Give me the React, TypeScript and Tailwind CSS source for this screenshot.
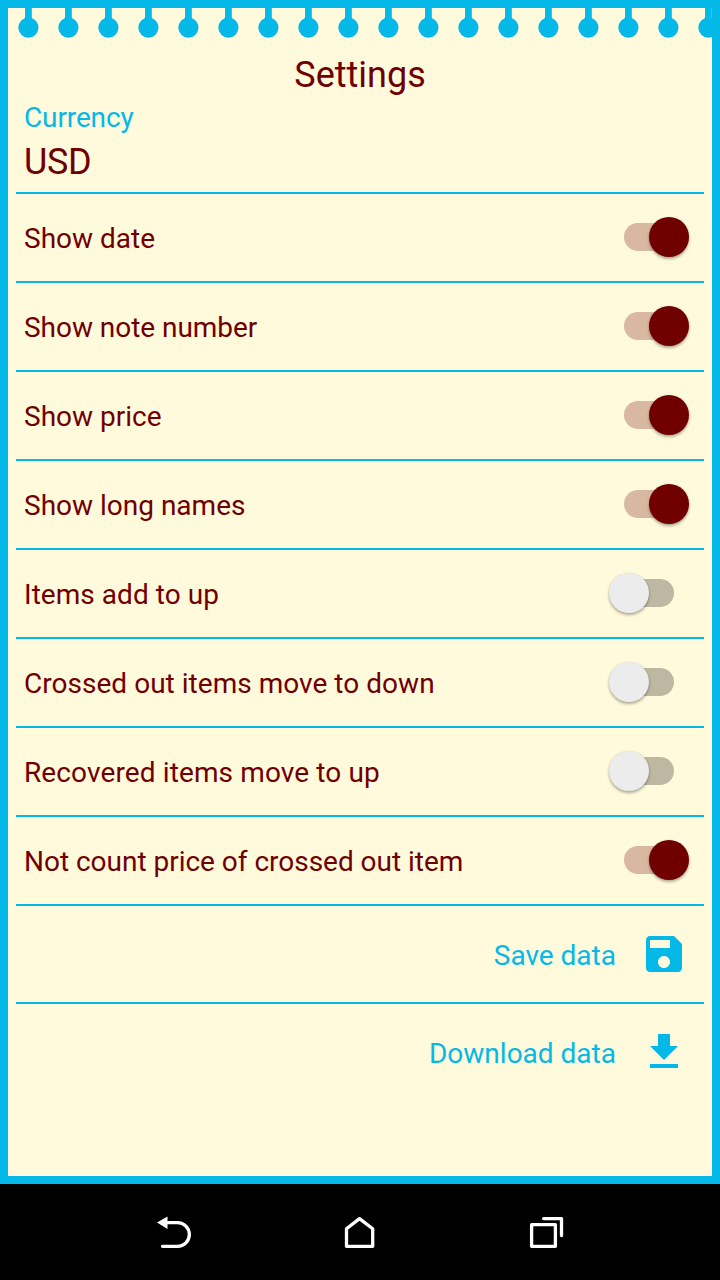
import { useState } from 'react';

const OPTIONS = [
  { label: 'Show date', on: true },
  { label: 'Show note number', on: true, tracking: 'tracking-[-0.04px]' },
  { label: 'Show price', on: true },
  { label: 'Show long names', on: true },
  { label: 'Items add to up', on: false, tracking: 'tracking-[0.04px]' },
  { label: 'Crossed out items move to down', on: false, tracking: 'tracking-[0.03px]' },
  { label: 'Recovered items move to up', on: false, tracking: 'tracking-[0.12px]' },
  { label: 'Not count price of crossed out item', on: true, tracking: 'tracking-[-0.02px]' },
];

function Binding() {
  return (
    <svg className="block w-full h-[30px] shrink-0" fill="#04b9e7">
      <defs>
        <pattern id="ring" width="40" height="30" patternUnits="userSpaceOnUse">
          <rect x="17" width="6.8" height="14" />
          <circle cx="20.4" cy="19.6" r="10.1" />
        </pattern>
      </defs>
      <rect width="100%" height="30" fill="url(#ring)" />
    </svg>
  );
}

function Toggle({ on, label, onChange }: { on: boolean; label: string; onChange: () => void }) {
  return (
    <button
      role="switch"
      aria-checked={on}
      aria-label={label}
      onClick={onChange}
      className={`relative w-[50px] h-7 mr-[30px] rounded-full ${on ? 'bg-[#d9b8a2]' : 'bg-[#beb8a2]'}`}
    >
      <span
        className={`absolute -top-1.5 size-10 rounded-full shadow-[0_2px_3px_rgba(0,0,0,0.3),0_0_2px_rgba(0,0,0,0.12)] ${
          on ? 'left-[25px] bg-[#700000]' : '-left-[15px] bg-[#ececec]'
        }`}
      />
    </button>
  );
}

function OptionRow({ label, on, tracking = '' }: { label: string; on: boolean; tracking?: string }) {
  const [checked, setChecked] = useState(on);

  return (
    <div className="flex items-center justify-between h-[89px] pl-2 pb-px border-b-2 border-[#04b9e7]">
      <span className={`relative top-px text-[28px] leading-[33px] ${tracking}`}>{label}</span>
      <Toggle on={checked} label={label} onChange={() => setChecked(!checked)} />
    </div>
  );
}

function ActionRow({ label, path }: { label: string; path: string }) {
  return (
    <button className="flex items-center justify-end gap-6 w-full h-24 pr-4 text-[28px] leading-[33px] text-[#04b9e7]">
      <span className="relative top-px">{label}</span>
      <svg className="size-12" viewBox="0 0 24 24" fill="currentColor">
        <path d={path} />
      </svg>
    </button>
  );
}

function NavBar() {
  return (
    <nav className="h-24 shrink-0 bg-black">
      <svg className="block" width="720" height="96" fill="none" stroke="#fff" strokeWidth="3.3" strokeLinecap="round" strokeLinejoin="round">
        <path d="M167 38.6H177.500a11.850 11.850 0 0 1 0 23.700H162.500" />
        <path d="M157 38.6L167.500 32.500V45Z" fill="#fff" stroke="none" />
        <path d="M346.500 44.700L359.500 34.600L372.700 44.700V62.300H346.500Z" />
        <path d="M531.600 40.600H555.400V62.300H531.600Z" />
        <path d="M543.600 34.600H561.500V51.500" />
      </svg>
    </nav>
  );
}

export default function App() {
  return (
    <div className="flex flex-col w-[720px] h-[1280px] font-[Roboto,sans-serif] text-[#700000]">
      <main className="flex flex-col flex-1 border-8 border-[#04b9e7] bg-[#fffadb]">
        <Binding />
        <div className="px-2 pt-4">
          <h1 className="text-center text-[36px] leading-[42px]">Settings</h1>
          <div className="h-[98px] pl-2 pt-[5px] border-b-2 border-[#04b9e7]">
            <p className="text-[28px] leading-[33px] tracking-[-0.12px] text-[#04b9e7]">Currency</p>
            <p className="pt-[7px] text-[36px] leading-[42px] tracking-[-0.3px]">USD</p>
          </div>
          {OPTIONS.map((option) => (
            <OptionRow key={option.label} {...option} />
          ))}
          <div className="border-b-2 border-[#04b9e7]">
            <ActionRow
              label="Save data"
              path="M17 3H5c-1.110 0-2 .9-2 2v14c0 1.100.890 2 2 2h14c1.100 0 2-.9 2-2V7l-4-4zm-5 16c-1.660 0-3-1.340-3-3s1.340-3 3-3 3 1.340 3 3-1.340 3-3 3zm3-10H5V5h10v4z"
            />
          </div>
          <ActionRow label="Download data" path="M19 9h-4V3H9v6H5l7 7 7-7zM5 18v2h14v-2H5z" />
        </div>
      </main>
      <NavBar />
    </div>
  );
}
